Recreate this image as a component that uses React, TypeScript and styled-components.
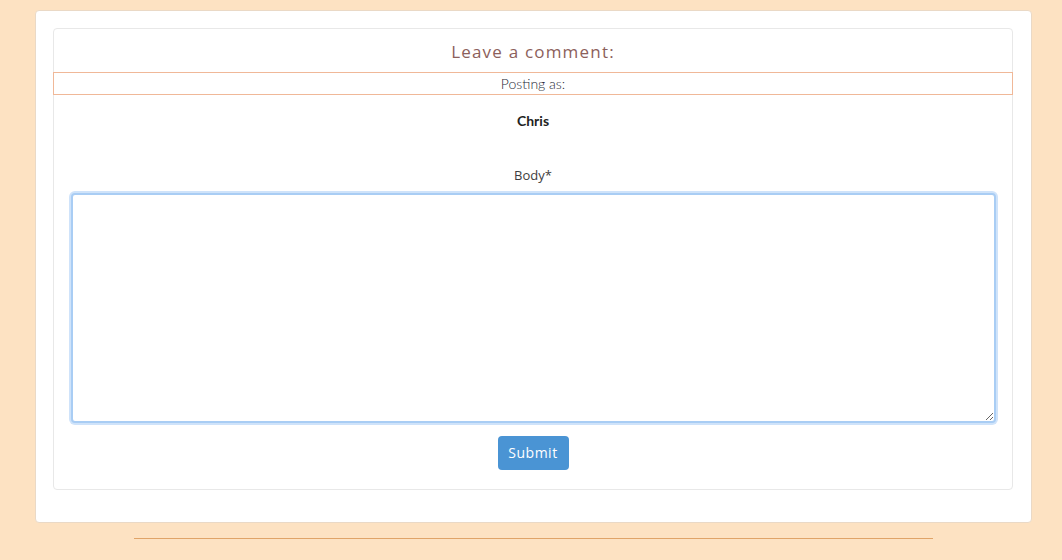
import React from "react";
import styled, { createGlobalStyle } from "styled-components";

const Global = createGlobalStyle`
  html, body { margin: 0; padding: 0; background: #fde2c2; }
  body { font-family: "Lato", "Open Sans", sans-serif; }
`;

const Page = styled.div`
  width: 1062px;
  height: 560px;
  background: #fde2c2;
  padding-top: 10px;
  box-sizing: border-box;
`;

const OuterCard = styled.div`
  width: 997px;
  margin-left: 35px;
  background: #fff;
  border: 1px solid #ead9c6;
  border-radius: 4px;
  box-sizing: border-box;
  padding: 17px 18px 32px 17px;
`;

const InnerCard = styled.div`
  border: 1px solid #e8e8e8;
  border-radius: 4px;
  display: flex;
  flex-direction: column;
  align-items: stretch;
  padding-bottom: 19px;
`;

const Title = styled.h3`
  margin: 0;
  height: 43px;
  padding-top: 2px;
  box-sizing: border-box;
  display: flex;
  align-items: center;
  justify-content: center;
  font-family: "Open Sans", sans-serif;
  font-weight: 400;
  font-size: 17px;
  letter-spacing: 1.2px;
  color: #8c605b;
`;

const PostingRow = styled.div`
  margin: 0 -1px;
  height: 21px;
  border: 1px solid #f0b898;
  display: flex;
  align-items: center;
  justify-content: center;
  font-family: "Lato", sans-serif;
  font-weight: 300;
  font-size: 14px;
  color: #262a36;
`;

const Name = styled.div`
  text-align: center;
  margin-top: 17px;
  font-family: "Lato", sans-serif;
  font-weight: 700;
  font-size: 14px;
  color: #222;
`;

const Label = styled.label`
  display: block;
  text-align: center;
  margin-top: 37px;
  font-family: "Open Sans", sans-serif;
  font-size: 13px;
  color: #3d3d3d;
`;

const Area = styled.textarea`
  display: block;
  margin: 9px 16px 0 17px;
  height: 230px;
  box-sizing: border-box;
  border: 2px solid #a9cdf4;
  border-radius: 4px;
  box-shadow: 0 0 0 2px #cfe3fa;
  outline: none;
  resize: vertical;
`;

const ButtonRow = styled.div`
  display: flex;
  justify-content: center;
  margin-top: 13px;
`;

const Submit = styled.button`
  width: 71px;
  height: 34px;
  padding: 0 0 2px;
  background: #4a94d4;
  border: none;
  border-radius: 4px;
  color: #fff;
  font-family: "Open Sans", sans-serif;
  font-size: 14px;
  letter-spacing: 0.5px;
`;

const Rule = styled.hr`
  width: 799px;
  margin: 15px 0 0 134px;
  border: none;
  border-top: 1px solid #e0a468;
`;

export default function App() {
  return (
    <Page>
      <Global />
      <OuterCard>
        <InnerCard>
          <Title>Leave a comment:</Title>
          <PostingRow>Posting as:</PostingRow>
          <Name>Chris</Name>
          <Label htmlFor="body">Body*</Label>
          <Area id="body" />
          <ButtonRow>
            <Submit>Submit</Submit>
          </ButtonRow>
        </InnerCard>
      </OuterCard>
      <Rule />
    </Page>
  );
}
